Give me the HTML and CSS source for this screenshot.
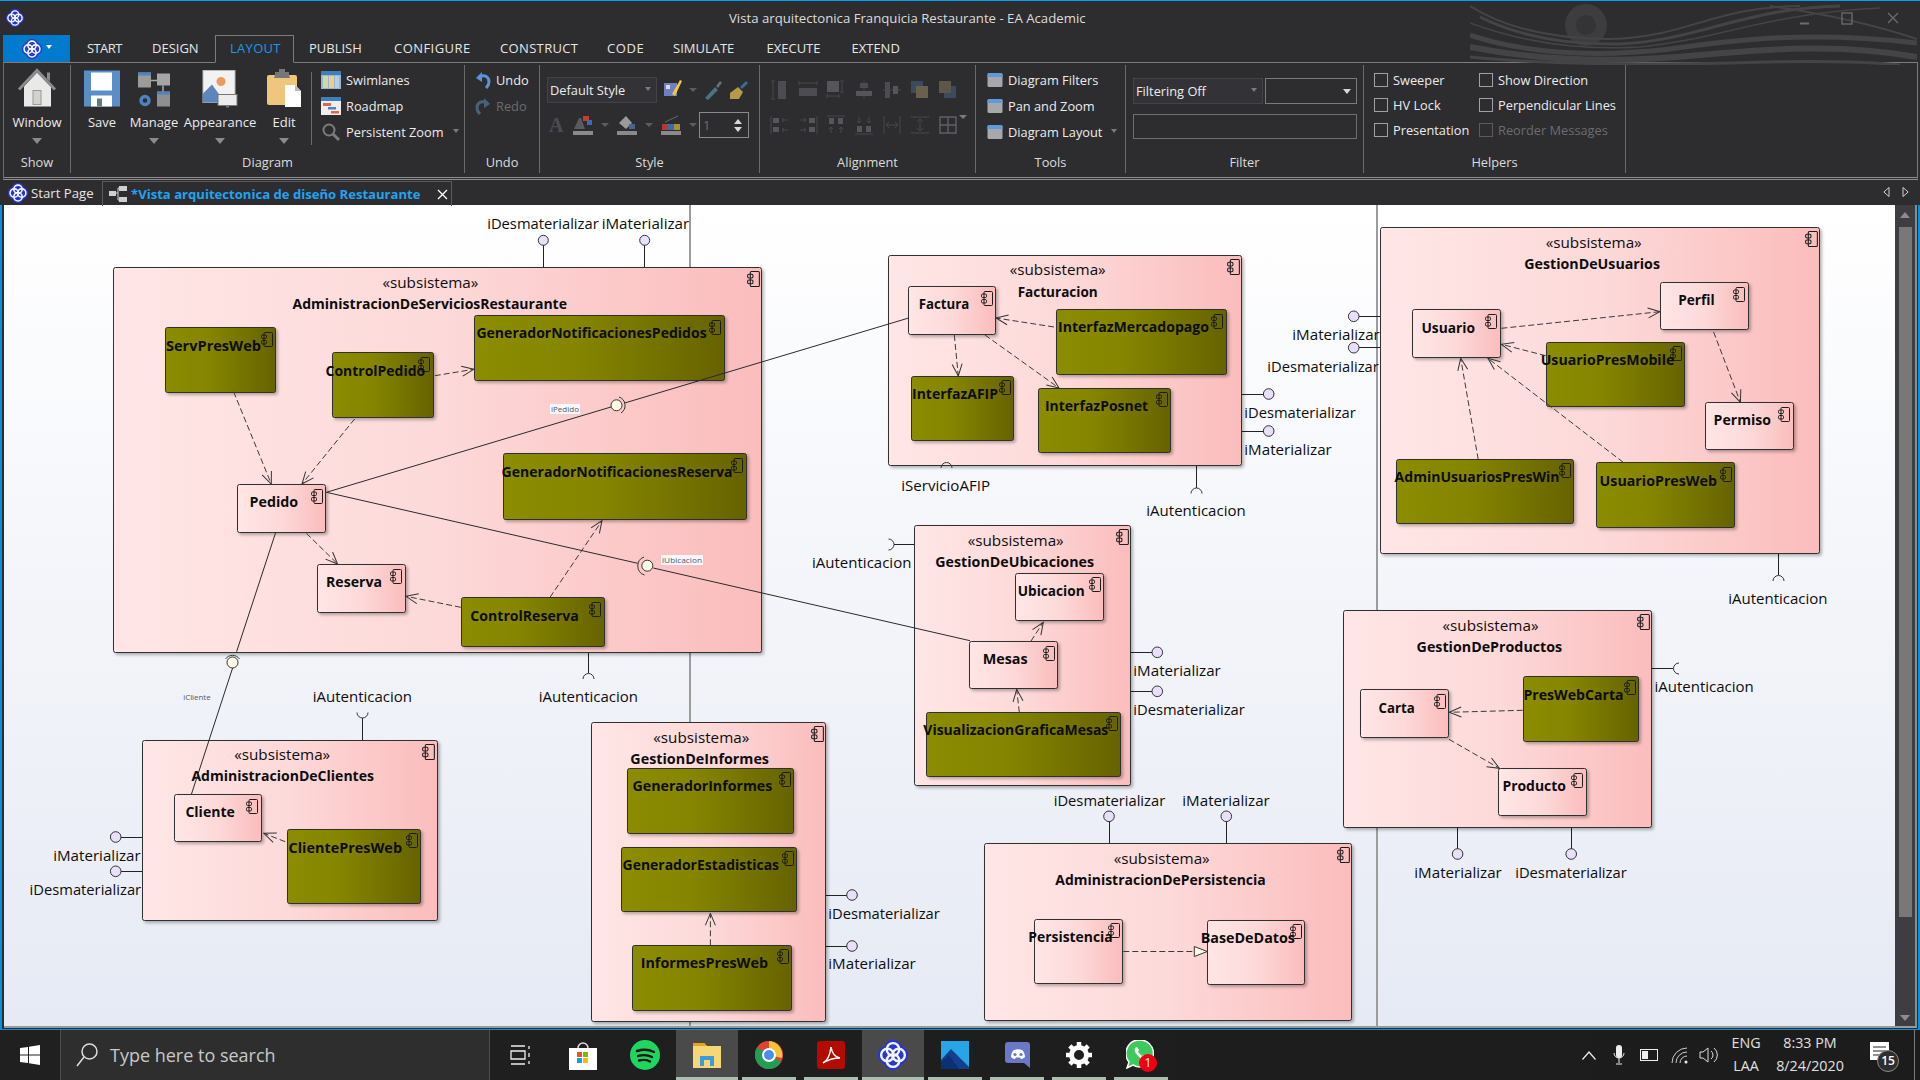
FILE: index.html
```html
<!DOCTYPE html>
<html lang="en">
<head>
<meta charset="utf-8">
<title>Vista arquitectonica Franquicia Restaurante - EA Academic</title>
<link rel="stylesheet" href="styles.css">
</head>
<body>
<svg class="sprite" aria-hidden="true">
  <symbol id="ea" viewBox="0 0 24 24">
    <g fill="none" stroke="#2636d8" stroke-width="5.200">
      <circle cx="12" cy="7.500" r="5"/><circle cx="16.500" cy="12" r="5"/><circle cx="12" cy="16.500" r="5"/><circle cx="7.500" cy="12" r="5"/>
    </g>
    <g fill="none" stroke="#f4f6ff" stroke-width="1.900">
      <circle cx="12" cy="7.500" r="5"/><circle cx="16.500" cy="12" r="5"/><circle cx="12" cy="16.500" r="5"/><circle cx="7.500" cy="12" r="5"/>
    </g>
  </symbol>
  <symbol id="comp" viewBox="0 0 12 15">
    <rect x="3" y=".5" width="8.500" height="14" rx="1" fill="none" stroke="#1c1c1c"/>
    <rect x=".5" y="3" width="5" height="3.500" rx="1.200" fill="none" stroke="#1c1c1c"/>
    <rect x=".5" y="8.500" width="5" height="3.500" rx="1.200" fill="none" stroke="#1c1c1c"/>
  </symbol>
  <symbol id="win-tile" viewBox="0 0 16 16">
    <rect x=".5" y="1" width="15" height="14" rx="1.500" fill="#a8a8ac"/>
    <path d="M.5 5V2.500A1.500 1.500 0 0 1 2 1h12a1.500 1.500 0 0 1 1.500 1.500V5z" fill="#5f9bd8"/>
  </symbol>
  <symbol id="al1" viewBox="0 0 20 20"><path d="M3 1v18M1 1h4M1 19h4" stroke="#47474d" fill="none"/><rect x="8" y="1" width="8" height="18" fill="#4c4c52"/></symbol>
  <symbol id="al2" viewBox="0 0 20 20"><path d="M1 3h18M1 1v4M19 1v4" stroke="#47474d" fill="none"/><rect x="1" y="8" width="18" height="8" fill="#4c4c52"/></symbol>
  <symbol id="al3" viewBox="0 0 20 20"><rect x="1" y="1" width="12" height="11" fill="#55555b"/><path d="M16 1v11M14 1h4M14 12h4M1 16h12M1 14v4M13 14v4" stroke="#47474d" fill="none"/></symbol>
  <symbol id="al4" viewBox="0 0 20 20"><path d="M10 1v18" stroke="#47474d"/><rect x="6" y="3" width="8" height="5" fill="#4c4c52"/><rect x="2" y="11" width="16" height="5" fill="#55555b"/></symbol>
  <symbol id="al5" viewBox="0 0 20 20"><path d="M1 10h18" stroke="#47474d"/><rect x="3" y="2" width="5" height="16" fill="#4c4c52"/><rect x="11" y="6" width="5" height="8" fill="#55555b"/></symbol>
  <symbol id="al6" viewBox="0 0 20 20"><rect x="1" y="1" width="12" height="12" fill="#3b4a5e"/><rect x="6" y="6" width="12" height="12" fill="#6a614c"/></symbol>
  <symbol id="al7" viewBox="0 0 20 20"><rect x="6" y="6" width="12" height="12" fill="#3b4a5e"/><rect x="1" y="1" width="12" height="12" fill="#5c5748"/></symbol>
  <symbol id="al8" viewBox="0 0 20 20"><path d="M1 1v18" stroke="#47474d"/><rect x="3" y="3" width="6" height="5" fill="#55555b"/><rect x="3" y="12" width="6" height="5" fill="#55555b"/><path d="M18 5h-6M12 5l2-2M12 5l2 2M18 15h-6M12 15l2-2M12 15l2 2" stroke="#47474d" fill="none"/></symbol>
  <symbol id="al9" viewBox="0 0 20 20"><path d="M19 1v18" stroke="#47474d"/><rect x="11" y="3" width="6" height="5" fill="#55555b"/><rect x="11" y="12" width="6" height="5" fill="#55555b"/><path d="M2 5h6M8 5L6 3M8 5L6 7M2 15h6M8 15l-2-2M8 15l-2 2" stroke="#47474d" fill="none"/></symbol>
  <symbol id="al10" viewBox="0 0 20 20"><path d="M1 1h18" stroke="#47474d"/><rect x="3" y="3" width="5" height="6" fill="#55555b"/><rect x="12" y="3" width="5" height="6" fill="#55555b"/><path d="M5 18v-6M5 12l-2 2M5 12l2 2M15 18v-6M15 12l-2 2M15 12l2 2" stroke="#47474d" fill="none"/></symbol>
  <symbol id="al11" viewBox="0 0 20 20"><path d="M1 19h18" stroke="#47474d"/><rect x="3" y="11" width="5" height="6" fill="#55555b"/><rect x="12" y="11" width="5" height="6" fill="#55555b"/><path d="M5 2v6M5 8L3 6M5 8l2-2M15 2v6M15 8l-2-2M15 8l2-2" stroke="#47474d" fill="none"/></symbol>
  <symbol id="al12" viewBox="0 0 20 20"><path d="M2 1v18M18 1v18M4 10h12M4 10l3-3M4 10l3 3M16 10l-3-3M16 10l-3 3" stroke="#47474d" fill="none"/></symbol>
  <symbol id="al13" viewBox="0 0 20 20"><path d="M1 2h18M1 18h18M10 4v12M10 4L7 7M10 4l3 3M10 16l-3-3M10 16l3-3" stroke="#47474d" fill="none"/></symbol>
  <symbol id="al14" viewBox="0 0 20 20"><path d="M2 2h16v16H2zM10 2v16M2 10h16" stroke="#5f5f68" stroke-width="1.400" fill="none"/></symbol>
</svg>

<div class="window">
  <header class="titlebar">
    <svg class="app-icon" width="18" height="18"><use href="#ea"/></svg>
    <span class="title-text">Vista arquitectonica Franquicia Restaurante - EA Academic</span>
    <svg class="swoosh" width="447" height="62" viewBox="0 0 447 62" fill="none" stroke="#444447">
      <circle cx="116" cy="22" r="21" fill="#3d3d40" stroke="none"/>
      <circle cx="116" cy="22" r="10" fill="#343437" stroke="none"/>
      <path d="M0 3C40 28 90 36 140 36 220 34 240 4 330 3" stroke-width="2"/>
      <path d="M10 14C50 34 95 42 150 41 230 37 270 6 370 3" stroke-width="3"/>
      <path d="M0 20C60 42 120 47 170 44 250 36 300 10 410 5" stroke-width="1.500"/>
      <path d="M0 32C60 52 130 54 200 46 270 36 340 28 447 40" stroke-width="5"/>
      <path d="M0 44C70 58 150 60 230 52 300 46 370 40 447 54" stroke-width="6"/>
      <path d="M0 54C80 62 170 62 260 60 320 58 390 58 430 62" stroke-width="3"/>
      <path d="M300 3C350 10 400 20 447 36" stroke-width="2"/>
    </svg>
    <div class="winctl">
      <svg width="118" height="16" viewBox="0 0 118 16" fill="none" stroke="#6d6d70" stroke-width="1.300">
        <path d="M0 11.500h9" stroke-width="2"/>
        <rect x="42" y="1" width="10" height="11"/>
        <path d="M88 1l10 10M98 1L88 11"/>
      </svg>
    </div>
  </header>

  <nav class="menubar">
    <div class="menu-app">
      <svg width="20" height="20"><use href="#ea"/></svg>
      <span class="menu-caret"></span>
    </div>
    <span class="tab t-start">START</span>
    <span class="tab t-design">DESIGN</span>
    <span class="tab tab-on">LAYOUT</span>
    <span class="tab t-publish">PUBLISH</span>
    <span class="tab t-configure">CONFIGURE</span>
    <span class="tab t-construct">CONSTRUCT</span>
    <span class="tab t-code">CODE</span>
    <span class="tab t-simulate">SIMULATE</span>
    <span class="tab t-execute">EXECUTE</span>
    <span class="tab">EXTEND</span>
  </nav>

  <section class="ribbon">
    <div class="grp g-show">
      <div class="grp-body">
        <div class="big w-full">
          <svg class="big-ico" width="40" height="40" viewBox="0 0 40 40">
            <path d="M7 18v20h27V18L20 4z" fill="#e9e9e7"/>
            <path d="M2 21L20 2l18 19" fill="none" stroke="#8b8b8b" stroke-width="3"/>
            <path d="M30 4h3v9l-3-3z" fill="#8b8b8b"/>
            <rect x="16" y="22" width="8" height="14" fill="#d2d2d0" stroke="#9a9a9a"/>
          </svg>
          <span class="big-label">Window</span><span class="caret-big"></span>
        </div>
      </div>
      <div class="grp-label">Show</div>
    </div>

    <div class="grp g-diagram">
      <div class="grp-body row">
        <div class="big w48">
          <svg class="big-ico" width="36" height="36" viewBox="0 0 36 36">
            <rect width="36" height="36" fill="#5b8ec7"/>
            <rect x="7" y="2" width="21" height="18" fill="#fff"/>
            <rect x="7" y="25" width="21" height="11" fill="#fff"/>
            <rect x="13" y="28" width="5" height="8" fill="#5d7d80"/>
          </svg>
          <span class="big-label">Save</span>
        </div>
        <div class="big w56">
          <svg class="big-ico" width="34" height="36" viewBox="0 0 34 36">
            <rect x="1" y="2" width="13" height="15" fill="#9b9b9b"/><rect x="1" y="2" width="13" height="3" fill="#4d84bd"/>
            <rect x="20" y="3" width="13" height="12" fill="#a5a5a5"/>
            <rect x="20" y="21" width="13" height="15" fill="#8f8f8f"/><rect x="20" y="21" width="13" height="3" fill="#4d84bd"/>
            <path d="M14 10h6M26 15v6" stroke="#aaa" stroke-width="1.500"/>
            <circle cx="8" cy="30" r="4" fill="none" stroke="#4d84bd" stroke-width="3.400"/>
          </svg>
          <span class="big-label">Manage</span><span class="caret-big"></span>
        </div>
        <div class="big w76">
          <svg class="big-ico" width="36" height="38" viewBox="0 0 36 38">
            <rect x="1" y="1" width="32" height="32" fill="#f2f2f2" stroke="#bbb"/>
            <circle cx="19" cy="12" r="4.500" fill="#ec9c5a"/>
            <path d="M1 33V24l9-9 13 18z" fill="#5b87bd"/>
            <rect x="16" y="25" width="19" height="11" fill="#ececec" stroke="#777"/>
            <path d="M24 36h3v2h-3z" fill="#777"/>
          </svg>
          <span class="big-label">Appearance</span><span class="caret-big"></span>
        </div>
        <div class="big w52">
          <svg class="big-ico" width="36" height="39" viewBox="0 0 36 39">
            <rect x="1" y="6" width="30" height="30" rx="2" fill="#eec67d"/>
            <path d="M9 6V3h4V0h6v3h4v3l1 3H8z" fill="#77777a"/>
            <path d="M19 16h10l6 6v16H19z" fill="#fff"/>
            <path d="M29 16v6h6z" fill="#bbb"/>
          </svg>
          <span class="big-label">Edit</span><span class="caret-big"></span>
        </div>
        <div class="grp-sep"></div>
        <div class="small-col">
          <div class="small">
            <svg width="20" height="18" viewBox="0 0 20 18"><rect width="20" height="18" fill="#9bb5cc"/><rect y="0" width="20" height="4" fill="#3f7fbd"/><rect x="2" y="5" width="5" height="12" fill="#cfd9a8"/><rect x="8" y="5" width="5" height="12" fill="#eacf8e"/><rect x="14" y="5" width="4" height="12" fill="#b5cfe6"/></svg>
            <span>Swimlanes</span>
          </div>
          <div class="small">
            <svg width="20" height="18" viewBox="0 0 20 18"><rect width="20" height="18" fill="#eee"/><rect width="20" height="4" fill="#3f7fbd"/><rect x="2" y="6" width="8" height="3" fill="#d9694e"/><rect x="7" y="10" width="8" height="2.500" fill="#4d84bd"/><rect x="10" y="14" width="8" height="2.500" fill="#d9694e"/></svg>
            <span>Roadmap</span>
          </div>
          <div class="small">
            <svg width="20" height="20" viewBox="0 0 20 20" fill="none"><circle cx="8" cy="8" r="5.500" stroke="#7c7c7c" stroke-width="2"/><path d="M12 12l6 6" stroke="#7c7c7c" stroke-width="3"/></svg>
            <span>Persistent Zoom</span><span class="caret-sm"></span>
          </div>
        </div>
      </div>
      <div class="grp-label">Diagram</div>
    </div>

    <div class="grp g-undo">
      <div class="grp-body col">
        <div class="small">
          <svg width="16" height="18" viewBox="0 0 16 18" fill="none"><path d="M4 6c6-3 10 0 10 5 0 2-1 4-3 6" stroke="#5b94d6" stroke-width="3"/><path d="M1 7l6-6v10z" fill="#5b94d6"/></svg>
          <span>Undo</span>
        </div>
        <div class="small dim">
          <svg width="16" height="18" viewBox="0 0 16 18" fill="none"><path d="M12 6C6 3 2 6 2 11c0 2 1 4 3 6" stroke="#4a6278" stroke-width="3"/><path d="M15 7L9 1v10z" fill="#4a6278"/></svg>
          <span>Redo</span>
        </div>
      </div>
      <div class="grp-label">Undo</div>
    </div>

    <div class="grp g-style">
      <div class="grp-body col style-body">
        <div class="style-row">
          <div class="field f-style"><span>Default Style</span><i class="caret-sm"></i></div>
          <svg width="20" height="20" viewBox="0 0 20 20"><rect x="1" y="3" width="13" height="13" fill="#6f7fc4"/><rect x="3" y="5" width="4" height="4" fill="#ddd"/><path d="M12 16L19 1l-2-1-8 14z" fill="#f0c83c"/></svg>
          <span class="caret-xs"></span>
          <svg width="20" height="20" viewBox="0 0 20 20"><path d="M2 18l10-11 3 3L5 20z" fill="#4b7286"/><path d="M13 6l4-5 2 2-4 5z" fill="#6b6b70"/></svg>
          <svg width="20" height="20" viewBox="0 0 20 20"><path d="M1 13l8-6 5 5-4 7H1z" fill="#b59a4a"/><path d="M11 7l6-6 2 2-6 6z" fill="#3f6d8d"/></svg>
        </div>
        <div class="style-row sr2">
          <span class="glyph-a">A</span>
          <svg width="20" height="20" viewBox="0 0 20 20"><rect y="16" width="20" height="4" fill="#8a8a8a"/><path d="M1 14L6 3h2l4 11z" fill="#595960"/><rect x="10" y="1" width="6" height="5" fill="#c63c32"/><rect x="14" y="5" width="5" height="5" fill="#3d69b5"/></svg>
          <span class="caret-xs"></span>
          <svg width="20" height="20" viewBox="0 0 20 20"><rect y="16" width="20" height="4" fill="#8a8a8a"/><path d="M2 8l7-7 6 7-6 6z" fill="#9a9a9a"/><rect x="12" y="9" width="6" height="5" fill="#46668f"/></svg>
          <span class="caret-xs"></span>
          <svg width="20" height="20" viewBox="0 0 20 20"><rect y="16" width="20" height="4" fill="#8a8a8a"/><rect x="1" y="9" width="6" height="6" fill="#b23a32"/><rect x="7" y="9" width="6" height="6" fill="#3f6aa8"/><rect x="13" y="9" width="6" height="6" fill="#a98f3a"/><path d="M4 7L17 1" stroke="#666"/></svg>
          <span class="caret-xs"></span>
          <div class="spin"><span>1</span><b class="spin-btn"><i class="tri-up"></i><i class="tri-dn"></i></b></div>
        </div>
      </div>
      <div class="grp-label">Style</div>
    </div>

    <div class="grp g-align">
      <div class="grp-body align-grid">
        <svg width="20" height="20"><use href="#al1"/></svg><svg width="20" height="20"><use href="#al2"/></svg><svg width="20" height="20"><use href="#al3"/></svg><svg width="20" height="20"><use href="#al4"/></svg><svg width="20" height="20"><use href="#al5"/></svg><svg width="20" height="20"><use href="#al6"/></svg><svg width="20" height="20"><use href="#al7"/></svg>
        <svg width="20" height="20"><use href="#al8"/></svg><svg width="20" height="20"><use href="#al9"/></svg><svg width="20" height="20"><use href="#al10"/></svg><svg width="20" height="20"><use href="#al11"/></svg><svg width="20" height="20"><use href="#al12"/></svg><svg width="20" height="20"><use href="#al13"/></svg><svg width="20" height="20"><use href="#al14"/></svg>
      </div>
      <span class="caret-xs align-caret"></span>
      <div class="grp-label">Alignment</div>
    </div>

    <div class="grp g-tools">
      <div class="grp-body col">
        <div class="small"><svg width="16" height="16"><use href="#win-tile"/></svg><span>Diagram Filters</span></div>
        <div class="small"><svg width="16" height="16"><use href="#win-tile"/></svg><span>Pan and Zoom</span></div>
        <div class="small"><svg width="16" height="16"><use href="#win-tile"/></svg><span>Diagram Layout</span><span class="caret-sm"></span></div>
      </div>
      <div class="grp-label">Tools</div>
    </div>

    <div class="grp g-filter">
      <div class="grp-body col filter-body">
        <div class="filter-row">
          <div class="field f-filter"><span>Filtering Off</span><i class="caret-sm"></i></div>
          <div class="field f-empty"><i class="caret-white"></i></div>
        </div>
        <div class="filter-input"></div>
      </div>
      <div class="grp-label">Filter</div>
    </div>

    <div class="grp g-helpers">
      <div class="grp-body helpers-grid">
        <label class="chk"><i></i>Sweeper</label><label class="chk"><i></i>Show Direction</label>
        <label class="chk"><i></i>HV Lock</label><label class="chk"><i></i>Perpendicular Lines</label>
        <label class="chk"><i></i>Presentation</label><label class="chk off"><i></i>Reorder Messages</label>
      </div>
      <div class="grp-label">Helpers</div>
    </div>
  </section>

  <div class="doctabs">
    <div class="doc doc-start"><svg width="20" height="20"><use href="#ea"/></svg><span>Start Page</span></div>
    <div class="doc doc-on">
      <svg width="19" height="18" viewBox="0 0 19 18"><rect x="0" y="6" width="7" height="5" fill="#cfcfcf"/><rect x="10" y="1" width="8" height="5" fill="#cfcfcf"/><rect x="10" y="12" width="8" height="5" fill="#cfcfcf"/><path d="M7 8h2V3h1M9 8v7h1" stroke="#cfcfcf" fill="none"/></svg>
      <span class="doc-name">*Vista arquitectonica de diseño Restaurante</span>
      <svg class="doc-x" width="11" height="11" viewBox="0 0 11 11"><path d="M1 1l9 9M10 1l-9 9" stroke="#fff" stroke-width="1.300"/></svg>
    </div>
    <div class="doc-nav">
      <svg width="26" height="10" viewBox="0 0 26 10" fill="none" stroke="#cfcfcf"><path d="M6 .5L.8 5 6 9.500zM20 .5L25.200 5 20 9.500z"/></svg>
    </div>
  </div>

  <main class="workspace">
    <div class="canvas">
      <svg class="diagram" width="1891" height="821" viewBox="4 205 1891 821">
        <defs>
          <linearGradient id="pk"><stop offset="0" stop-color="#ffe6e6"/><stop offset=".5" stop-color="#fdd9d9"/><stop offset="1" stop-color="#fbbcbc"/></linearGradient>
          <linearGradient id="ol"><stop offset="0" stop-color="#8c8c00"/><stop offset=".4" stop-color="#858500"/><stop offset="1" stop-color="#666300"/></linearGradient>
          <marker id="open" markerUnits="userSpaceOnUse" markerWidth="14" markerHeight="14" refX="13" refY="7" orient="auto"><path d="M1 2L13 7 1 12" fill="none" stroke="#333"/></marker>
        </defs>

        <path class="lane" d="M690 205V1026M1377 205V1026"/>

        <!-- stems of the interface lollipops and sockets -->
        <path class="stem" d="M543.500 245V267M644.500 245V267M588.500 652V673M362.500 740V718M1196.500 465V488M946.500 440V463M1778.500 553V575M1241 394.500H1263M1241 431.500H1263M1359 316.500H1380M1359 347.500H1380M1130 652.500H1152M1130 691.500H1152M914 544.500H894M1651 668.500H1673M1109.500 843V821M1226.500 843V821M1457.500 827V849M1571.500 827V849M142 837.500H121M142 871.500H121M825 895.500H847M825 946.500H847"/>

        <!-- AdministracionDeServiciosRestaurante -->
        <rect class="box" x="113.500" y="267.500" width="648" height="385" rx="2" fill="url(#pk)"/>
        <use href="#comp" x="747" y="271" width="13" height="16"/>
        <text class="st" x="382.400" y="288" textLength="96" lengthAdjust="spacingAndGlyphs">«subsistema»</text>
        <text class="nm" x="292.500" y="309" textLength="274.500" lengthAdjust="spacingAndGlyphs">AdministracionDeServiciosRestaurante</text>

        <rect class="box" x="165.500" y="327.500" width="110" height="65" rx="2" fill="url(#ol)"/>
        <use href="#comp" x="261" y="332" width="12" height="15"/>
        <text class="nm" x="166" y="350.700" textLength="95" lengthAdjust="spacingAndGlyphs">ServPresWeb</text>

        <rect class="box" x="332.500" y="352.500" width="101" height="65" rx="2" fill="url(#ol)"/>
        <use href="#comp" x="418" y="357" width="12" height="15"/>
        <text class="nm" x="325.500" y="376" textLength="99.700" lengthAdjust="spacingAndGlyphs">ControlPedido</text>

        <rect class="box" x="474.500" y="315.500" width="250" height="65" rx="2" fill="url(#ol)"/>
        <use href="#comp" x="709" y="320" width="12" height="15"/>
        <text class="nm" x="476.400" y="338" textLength="230.300" lengthAdjust="spacingAndGlyphs">GeneradorNotificacionesPedidos</text>

        <rect class="box" x="237.500" y="484.500" width="88" height="48" rx="2" fill="url(#pk)"/>
        <use href="#comp" x="311" y="489" width="12" height="15"/>
        <text class="nm" x="249.600" y="506.700" textLength="48.600" lengthAdjust="spacingAndGlyphs">Pedido</text>

        <rect class="box" x="503.500" y="453.500" width="243" height="66" rx="2" fill="url(#ol)"/>
        <use href="#comp" x="731" y="458" width="12" height="15"/>
        <text class="nm" x="501.600" y="477" textLength="231" lengthAdjust="spacingAndGlyphs">GeneradorNotificacionesReserva</text>

        <rect class="box" x="317.500" y="564.500" width="88" height="48" rx="2" fill="url(#pk)"/>
        <use href="#comp" x="390" y="569" width="12" height="15"/>
        <text class="nm" x="326" y="587" textLength="56" lengthAdjust="spacingAndGlyphs">Reserva</text>

        <rect class="box" x="461.500" y="597.500" width="143" height="49" rx="2" fill="url(#ol)"/>
        <use href="#comp" x="589" y="602" width="12" height="15"/>
        <text class="nm" x="470.300" y="621" textLength="108.400" lengthAdjust="spacingAndGlyphs">ControlReserva</text>

        <!-- Facturacion -->
        <rect class="box" x="888.500" y="255.500" width="353" height="210" rx="2" fill="url(#pk)"/>
        <use href="#comp" x="1227" y="259" width="13" height="16"/>
        <text class="st" x="1009.700" y="275.300" textLength="96" lengthAdjust="spacingAndGlyphs">«subsistema»</text>
        <text class="nm" x="1017.700" y="296.700" textLength="80" lengthAdjust="spacingAndGlyphs">Facturacion</text>

        <rect class="box" x="908.500" y="286.500" width="87" height="48" rx="2" fill="url(#pk)"/>
        <use href="#comp" x="981" y="291" width="12" height="15"/>
        <text class="nm" x="918.700" y="308.700" textLength="50.600" lengthAdjust="spacingAndGlyphs">Factura</text>

        <rect class="box" x="1056.500" y="309.500" width="170" height="65" rx="2" fill="url(#ol)"/>
        <use href="#comp" x="1211" y="314" width="12" height="15"/>
        <text class="nm" x="1058" y="332" textLength="151" lengthAdjust="spacingAndGlyphs">InterfazMercadopago</text>

        <rect class="box" x="911.500" y="376.500" width="102" height="64" rx="2" fill="url(#ol)"/>
        <use href="#comp" x="999" y="380" width="12" height="15"/>
        <text class="nm" x="912" y="398.700" textLength="86" lengthAdjust="spacingAndGlyphs">InterfazAFIP</text>

        <rect class="box" x="1038.500" y="388.500" width="132" height="64" rx="2" fill="url(#ol)"/>
        <use href="#comp" x="1156" y="392" width="12" height="15"/>
        <text class="nm" x="1045" y="411" textLength="103" lengthAdjust="spacingAndGlyphs">InterfazPosnet</text>

        <!-- GestionDeUsuarios -->
        <rect class="box" x="1380.500" y="227.500" width="439" height="326" rx="2" fill="url(#pk)"/>
        <use href="#comp" x="1805" y="231" width="13" height="16"/>
        <text class="st" x="1545.700" y="247.700" textLength="96" lengthAdjust="spacingAndGlyphs">«subsistema»</text>
        <text class="nm" x="1524.300" y="268.700" textLength="135.700" lengthAdjust="spacingAndGlyphs">GestionDeUsuarios</text>

        <rect class="box" x="1412.500" y="309.500" width="88" height="48" rx="2" fill="url(#pk)"/>
        <use href="#comp" x="1485" y="314" width="12" height="15"/>
        <text class="nm" x="1421.400" y="332.700" textLength="53.600" lengthAdjust="spacingAndGlyphs">Usuario</text>

        <rect class="box" x="1660.500" y="282.500" width="88" height="47" rx="2" fill="url(#pk)"/>
        <use href="#comp" x="1733" y="287" width="12" height="15"/>
        <text class="nm" x="1678.200" y="304.700" textLength="36.400" lengthAdjust="spacingAndGlyphs">Perfil</text>

        <rect class="box" x="1546.500" y="342.500" width="138" height="64" rx="2" fill="url(#ol)"/>
        <use href="#comp" x="1670" y="346" width="12" height="15"/>
        <text class="nm" x="1540.700" y="364.700" textLength="133.600" lengthAdjust="spacingAndGlyphs">UsuarioPresMobile</text>

        <rect class="box" x="1705.500" y="402.500" width="88" height="47" rx="2" fill="url(#pk)"/>
        <use href="#comp" x="1778" y="407" width="12" height="15"/>
        <text class="nm" x="1713.600" y="425" textLength="57.400" lengthAdjust="spacingAndGlyphs">Permiso</text>

        <rect class="box" x="1396.500" y="459.500" width="177" height="64" rx="2" fill="url(#ol)"/>
        <use href="#comp" x="1559" y="463" width="12" height="15"/>
        <text class="nm" x="1394.600" y="481.700" textLength="165" lengthAdjust="spacingAndGlyphs">AdminUsuariosPresWin</text>

        <rect class="box" x="1596.500" y="462.500" width="138" height="65" rx="2" fill="url(#ol)"/>
        <use href="#comp" x="1720" y="467" width="12" height="15"/>
        <text class="nm" x="1599.600" y="485.700" textLength="117.400" lengthAdjust="spacingAndGlyphs">UsuarioPresWeb</text>

        <!-- AdministracionDeClientes -->
        <rect class="box" x="142.500" y="740.500" width="295" height="180" rx="2" fill="url(#pk)"/>
        <use href="#comp" x="422" y="744" width="13" height="16"/>
        <text class="st" x="234.200" y="760" textLength="96" lengthAdjust="spacingAndGlyphs">«subsistema»</text>
        <text class="nm" x="191.400" y="780.700" textLength="182.600" lengthAdjust="spacingAndGlyphs">AdministracionDeClientes</text>

        <rect class="box" x="174.500" y="794.500" width="87" height="47" rx="2" fill="url(#pk)"/>
        <use href="#comp" x="246" y="799" width="12" height="15"/>
        <text class="nm" x="185.400" y="816.700" textLength="49.400" lengthAdjust="spacingAndGlyphs">Cliente</text>

        <rect class="box" x="287.500" y="829.500" width="133" height="74" rx="2" fill="url(#ol)"/>
        <use href="#comp" x="406" y="833" width="12" height="15"/>
        <text class="nm" x="288.500" y="852.700" textLength="113.500" lengthAdjust="spacingAndGlyphs">ClientePresWeb</text>

        <!-- GestionDeInformes -->
        <rect class="box" x="591.500" y="722.500" width="234" height="299" rx="2" fill="url(#pk)"/>
        <use href="#comp" x="811" y="726" width="13" height="16"/>
        <text class="st" x="653.300" y="742.700" textLength="96" lengthAdjust="spacingAndGlyphs">«subsistema»</text>
        <text class="nm" x="630.300" y="763.700" textLength="138.700" lengthAdjust="spacingAndGlyphs">GestionDeInformes</text>

        <rect class="box" x="627.500" y="768.500" width="166" height="65" rx="2" fill="url(#ol)"/>
        <use href="#comp" x="779" y="772" width="12" height="15"/>
        <text class="nm" x="632.500" y="790.700" textLength="139.800" lengthAdjust="spacingAndGlyphs">GeneradorInformes</text>

        <rect class="box" x="621.500" y="847.500" width="175" height="64" rx="2" fill="url(#ol)"/>
        <use href="#comp" x="782" y="851" width="12" height="15"/>
        <text class="nm" x="622.600" y="869.700" textLength="156.400" lengthAdjust="spacingAndGlyphs">GeneradorEstadisticas</text>

        <rect class="box" x="632.500" y="945.500" width="159" height="65" rx="2" fill="url(#ol)"/>
        <use href="#comp" x="777" y="949" width="12" height="15"/>
        <text class="nm" x="640.700" y="967.700" textLength="127.300" lengthAdjust="spacingAndGlyphs">InformesPresWeb</text>

        <!-- GestionDeUbicaciones -->
        <rect class="box" x="914.500" y="525.500" width="216" height="260" rx="2" fill="url(#pk)"/>
        <use href="#comp" x="1116" y="529" width="13" height="16"/>
        <text class="st" x="967.700" y="545.700" textLength="96" lengthAdjust="spacingAndGlyphs">«subsistema»</text>
        <text class="nm" x="935.300" y="566.700" textLength="158.700" lengthAdjust="spacingAndGlyphs">GestionDeUbicaciones</text>

        <rect class="box" x="1015.500" y="573.500" width="88" height="47" rx="2" fill="url(#pk)"/>
        <use href="#comp" x="1089" y="577" width="12" height="15"/>
        <text class="nm" x="1017.700" y="596" textLength="67" lengthAdjust="spacingAndGlyphs">Ubicacion</text>

        <rect class="box" x="969.500" y="641.500" width="88" height="47" rx="2" fill="url(#pk)"/>
        <use href="#comp" x="1043" y="646" width="12" height="15"/>
        <text class="nm" x="982.700" y="664" textLength="45" lengthAdjust="spacingAndGlyphs">Mesas</text>

        <rect class="box" x="926.500" y="712.500" width="194" height="64" rx="2" fill="url(#ol)"/>
        <use href="#comp" x="1106" y="716" width="12" height="15"/>
        <text class="nm" x="923.300" y="735" textLength="185" lengthAdjust="spacingAndGlyphs">VisualizacionGraficaMesas</text>

        <!-- AdministracionDePersistencia -->
        <rect class="box" x="984.500" y="843.500" width="367" height="177" rx="2" fill="url(#pk)"/>
        <use href="#comp" x="1337" y="847" width="13" height="16"/>
        <text class="st" x="1113.700" y="863.700" textLength="96" lengthAdjust="spacingAndGlyphs">«subsistema»</text>
        <text class="nm" x="1055.300" y="884.700" textLength="210.400" lengthAdjust="spacingAndGlyphs">AdministracionDePersistencia</text>

        <rect class="box" x="1034.500" y="919.500" width="88" height="64" rx="2" fill="url(#pk)"/>
        <use href="#comp" x="1108" y="923" width="12" height="15"/>
        <text class="nm" x="1028.300" y="941.700" textLength="84.400" lengthAdjust="spacingAndGlyphs">Persistencia</text>

        <rect class="box" x="1207.500" y="920.500" width="97" height="64" rx="2" fill="url(#pk)"/>
        <use href="#comp" x="1290" y="924" width="12" height="15"/>
        <text class="nm" x="1200.700" y="942.700" textLength="94.300" lengthAdjust="spacingAndGlyphs">BaseDeDatos</text>

        <!-- GestionDeProductos -->
        <rect class="box" x="1343.500" y="610.500" width="308" height="217" rx="2" fill="url(#pk)"/>
        <use href="#comp" x="1637" y="614" width="13" height="16"/>
        <text class="st" x="1442.500" y="630.700" textLength="96" lengthAdjust="spacingAndGlyphs">«subsistema»</text>
        <text class="nm" x="1416.600" y="651.700" textLength="145.600" lengthAdjust="spacingAndGlyphs">GestionDeProductos</text>

        <rect class="box" x="1360.500" y="689.500" width="88" height="48" rx="2" fill="url(#pk)"/>
        <use href="#comp" x="1434" y="694" width="12" height="15"/>
        <text class="nm" x="1378.600" y="712.700" textLength="36.100" lengthAdjust="spacingAndGlyphs">Carta</text>

        <rect class="box" x="1523.500" y="676.500" width="115" height="65" rx="2" fill="url(#ol)"/>
        <use href="#comp" x="1624" y="680" width="12" height="15"/>
        <text class="nm" x="1523.400" y="700" textLength="100.200" lengthAdjust="spacingAndGlyphs">PresWebCarta</text>

        <rect class="box" x="1498.500" y="768.500" width="88" height="47" rx="2" fill="url(#pk)"/>
        <use href="#comp" x="1571" y="773" width="12" height="15"/>
        <text class="nm" x="1502.400" y="790.700" textLength="63.600" lengthAdjust="spacingAndGlyphs">Producto</text>

        <!-- dependency arrows -->
        <g class="dep">
          <path marker-end="url(#open)" d="M233.600 391.700L271.300 484"/>
          <path marker-end="url(#open)" d="M354.600 419L302 484"/>
          <path marker-end="url(#open)" d="M434.800 375.700L473.800 369.300"/>
          <path marker-end="url(#open)" d="M306.400 533.300L337.600 564"/>
          <path marker-end="url(#open)" d="M460.800 607.300L406 596.300"/>
          <path marker-end="url(#open)" d="M550 597.300L602 520.700"/>
          <path marker-end="url(#open)" d="M1054 327L996 318"/>
          <path marker-end="url(#open)" d="M954.300 335L958.300 376"/>
          <path marker-end="url(#open)" d="M985 335L1059 388"/>
          <path marker-end="url(#open)" d="M1501.400 328.300L1660 311.700"/>
          <path marker-end="url(#open)" d="M1713.600 332L1740.400 402.300"/>
          <path marker-end="url(#open)" d="M1545.700 355.700L1501.400 344.300"/>
          <path marker-end="url(#open)" d="M1478.200 459.300L1460.700 358.300"/>
          <path marker-end="url(#open)" d="M1623.200 462.300L1487.900 358.300"/>
          <path marker-end="url(#open)" d="M285.200 841.700L263.800 833.300"/>
          <path marker-end="url(#open)" d="M710.400 945.300V913.300"/>
          <path marker-end="url(#open)" d="M1031 641L1043.300 622.300"/>
          <path marker-end="url(#open)" d="M1019.300 712.300L1016.700 689.300"/>
          <path marker-end="url(#open)" d="M1522.700 710.300L1449.300 712.300"/>
          <path marker-end="url(#open)" d="M1449 739.300L1499.400 768.300"/>
          <path d="M1123.300 951.500H1194.300"/>
        </g>
        <path class="tri" d="M1194.300 946.500L1207.300 951.500 1194.300 956.500z"/>

        <!-- assembly connectors -->
        <path class="wire" d="M326.400 492.300L611.300 406.900M624.700 403L908.700 318M326.400 492.300L637.700 563.300M653.300 568L970 640.700M275.600 532.700L236.600 651.700M232.600 668L191.400 794.300"/>
        <circle class="ball" cx="616.500" cy="405.300" r="5.500"/><path class="arc" d="M619 397A9 9 0 0 1 621 413"/>
        <circle class="ball" cx="647.300" cy="565.700" r="5.500"/><path class="arc" d="M644 557A9.500 9.500 0 0 0 644.500 575"/>
        <circle class="ball" cx="232.500" cy="662.500" r="5.500"/><path class="arc" d="M225.500 659A8.500 8.500 0 0 1 239.500 659"/>
        <rect class="tag" x="550" y="404" width="30" height="10"/><text class="tiny" x="551" y="411.500" textLength="28" lengthAdjust="spacingAndGlyphs">iPedido</text>
        <rect class="tag" x="661" y="555" width="42" height="10"/><text class="tiny" x="662" y="562.500" textLength="40" lengthAdjust="spacingAndGlyphs">iUbicacion</text>
        <text class="tiny" x="183.200" y="699.500" textLength="27.400" lengthAdjust="spacingAndGlyphs">iCliente</text>

        <!-- provided and required interfaces -->
        <g class="lolli">
          <circle cx="543.300" cy="240.300" r="5"/><circle cx="644.700" cy="240.300" r="5"/>
          <circle cx="1268.700" cy="394" r="5.300"/><circle cx="1268.700" cy="431" r="5.300"/>
          <circle cx="1353.700" cy="316.300" r="5.300"/><circle cx="1353.700" cy="347.700" r="5.300"/>
          <circle cx="1157.300" cy="652.300" r="5.300"/><circle cx="1157.300" cy="691.300" r="5.300"/>
          <circle cx="1109" cy="816.300" r="5.300"/><circle cx="1226.300" cy="816.300" r="5.300"/>
          <circle cx="1457.600" cy="854" r="5.300"/><circle cx="1571.200" cy="854" r="5.300"/>
          <circle cx="115.700" cy="837" r="5.300"/><circle cx="115.700" cy="871.300" r="5.300"/>
          <circle cx="852" cy="895" r="5.300"/><circle cx="852" cy="946" r="5.300"/>
        </g>
        <path class="arc" d="M583 679A5.500 5.500 0 0 1 594 679M357 712.500A5.500 5.500 0 0 0 368 712.500M1191 493.500A5.500 5.500 0 0 1 1202 493.500M941 468A5.500 5.500 0 0 1 952 468M1773 581A5.500 5.500 0 0 1 1784 581M888.500 539A5.500 5.500 0 0 1 888.500 550M1679 663A5.500 5.500 0 0 0 1679 674"/>

        <text class="lb" x="487.200" y="228.700" textLength="111.500" lengthAdjust="spacingAndGlyphs">iDesmaterializar</text>
        <text class="lb" x="601.700" y="228.700" textLength="87.500" lengthAdjust="spacingAndGlyphs">iMaterializar</text>
        <text class="lb" x="901.300" y="490.700" textLength="88.700" lengthAdjust="spacingAndGlyphs">iServicioAFIP</text>
        <text class="lb" x="1146.300" y="515.700" textLength="99.400" lengthAdjust="spacingAndGlyphs">iAutenticacion</text>
        <text class="lb" x="1244.300" y="417.700" textLength="111.500" lengthAdjust="spacingAndGlyphs">iDesmaterializar</text>
        <text class="lb" x="1244.300" y="454.700" textLength="87.500" lengthAdjust="spacingAndGlyphs">iMaterializar</text>
        <text class="lb" x="1292.300" y="340" textLength="87.500" lengthAdjust="spacingAndGlyphs">iMaterializar</text>
        <text class="lb" x="1267.300" y="371.700" textLength="111.500" lengthAdjust="spacingAndGlyphs">iDesmaterializar</text>
        <text class="lb" x="1728.200" y="604" textLength="99.400" lengthAdjust="spacingAndGlyphs">iAutenticacion</text>
        <text class="lb" x="312.700" y="702" textLength="99.400" lengthAdjust="spacingAndGlyphs">iAutenticacion</text>
        <text class="lb" x="538.700" y="702" textLength="99.400" lengthAdjust="spacingAndGlyphs">iAutenticacion</text>
        <text class="lb" x="53.200" y="860.700" textLength="87.500" lengthAdjust="spacingAndGlyphs">iMaterializar</text>
        <text class="lb" x="29.600" y="894.700" textLength="111.500" lengthAdjust="spacingAndGlyphs">iDesmaterializar</text>
        <text class="lb" x="828.300" y="918.700" textLength="111.500" lengthAdjust="spacingAndGlyphs">iDesmaterializar</text>
        <text class="lb" x="828.300" y="969.300" textLength="87.500" lengthAdjust="spacingAndGlyphs">iMaterializar</text>
        <text class="lb" x="1133.300" y="675.700" textLength="87.500" lengthAdjust="spacingAndGlyphs">iMaterializar</text>
        <text class="lb" x="1133.300" y="715" textLength="111.500" lengthAdjust="spacingAndGlyphs">iDesmaterializar</text>
        <text class="lb" x="812" y="567.700" textLength="99.400" lengthAdjust="spacingAndGlyphs">iAutenticacion</text>
        <text class="lb" x="1053.700" y="805.700" textLength="111.500" lengthAdjust="spacingAndGlyphs">iDesmaterializar</text>
        <text class="lb" x="1182.300" y="805.700" textLength="87.500" lengthAdjust="spacingAndGlyphs">iMaterializar</text>
        <text class="lb" x="1654.400" y="691.700" textLength="99.400" lengthAdjust="spacingAndGlyphs">iAutenticacion</text>
        <text class="lb" x="1414.300" y="877.700" textLength="87.500" lengthAdjust="spacingAndGlyphs">iMaterializar</text>
        <text class="lb" x="1515.200" y="877.700" textLength="111.500" lengthAdjust="spacingAndGlyphs">iDesmaterializar</text>
      </svg>
    </div>
    <div class="vscroll">
      <i class="vs-up"></i>
      <div class="vs-thumb"></div>
      <i class="vs-down"></i>
    </div>
  </main>

  <footer class="taskbar">
    <div class="start">
      <svg width="20" height="20" viewBox="0 0 20 20" fill="#fff"><path d="M0 3l8-1v7.500H0zM9 1.800L20 0v9.500H9zM0 10.500h8V18l-8-1zM9 10.500h11V20L9 18.200z"/></svg>
    </div>
    <div class="search">
      <svg width="22" height="24" viewBox="0 0 22 24" fill="none" stroke="#ddd" stroke-width="1.500"><circle cx="13.500" cy="8.500" r="7.500"/><path d="M8 14L1 23"/></svg>
      <span>Type here to search</span>
    </div>
    <div class="tb"><svg width="22" height="20" viewBox="0 0 22 20" fill="none" stroke="#eee" stroke-width="1.300"><path d="M1 1h14M1 19h14M1 6h14v8H1zM19 1v3M19 8v4M19 16v3"/></svg></div>
    <div class="tb"><svg width="30" height="30" viewBox="0 0 30 30"><path d="M10 8a5 5 0 0 1 10 0" fill="none" stroke="#ddd" stroke-width="1.500"/><rect x="1" y="8" width="28" height="22" fill="#fff"/><rect x="9" y="12" width="5" height="5" fill="#f25022"/><rect x="15" y="12" width="5" height="5" fill="#7fba00"/><rect x="9" y="18" width="5" height="5" fill="#00a4ef"/><rect x="15" y="18" width="5" height="5" fill="#ffb900"/></svg></div>
    <div class="tb"><svg width="30" height="30" viewBox="0 0 30 30"><circle cx="15" cy="15" r="15" fill="#1ed760"/><path d="M7 11c6-2 12-1.500 17 1M8 16c5-1.500 10-1 14 1M9 20.500c4-1 8-.8 11 1" fill="none" stroke="#191414" stroke-width="2.400" stroke-linecap="round"/></svg></div>
    <div class="tb act"><svg width="30" height="26" viewBox="0 0 30 26"><path d="M1 1h11l3 3h14v22H1z" fill="#f7d675"/><path d="M1 1h11l3 3H1z" fill="#e3a520"/><rect x="8" y="14" width="14" height="10" fill="#3b9be0"/><rect x="12" y="18" width="6" height="6" fill="#f7d675"/></svg></div>
    <div class="tb run"><svg width="28" height="28" viewBox="0 0 28 28"><circle cx="14" cy="14" r="14" fill="#dd4438"/><path d="M14 14L26 21A14 14 0 0 1 6 25.500z" fill="#1e9f55"/><path d="M14 14L6 25.500A14 14 0 0 1 2 6.500z" fill="#1e9f55"/><path d="M14 14L14 0A14 14 0 0 1 27 17z" fill="#f2c335"/><path d="M2 7a14 14 0 0 1 12-7v7z" fill="#dd4438"/><circle cx="14" cy="14" r="6" fill="#4a8df0" stroke="#fff" stroke-width="2"/></svg></div>
    <div class="tb run"><svg width="28" height="28" viewBox="0 0 28 28"><rect width="28" height="28" rx="3" fill="#b30b00"/><path d="M6 22c4-2 7-8 8-16 1 7 4 10 9 11-5 0-11 1-17 5z" fill="none" stroke="#fff" stroke-width="1.500"/></svg></div>
    <div class="tb act run"><svg width="30" height="30"><use href="#ea"/></svg></div>
    <div class="tb run"><svg width="28" height="28" viewBox="0 0 28 28"><rect width="28" height="28" fill="#27a5e6"/><path d="M0 28V19L10 8l18 18v2z" fill="#143f8c"/><path d="M0 28V21L8 14l10 14z" fill="#0d2f75"/></svg></div>
    <div class="tb run"><svg width="25" height="26" viewBox="0 0 25 26"><path d="M3 0h19a3 3 0 0 1 3 3v23l-6-5H3a3 3 0 0 1-3-3V3a3 3 0 0 1 3-3z" fill="#6a78c8"/><path d="M6 15c0-3 1.500-6 3-7 3-1 5-1 8 0 1.500 1 3 4 3 7-1.500 1.500-3 2-4 2l-1-1.500h-4L10 17c-1 0-2.500-.5-4-2z" fill="#fff"/><circle cx="10" cy="12.500" r="1.600" fill="#6a78c8"/><circle cx="16" cy="12.500" r="1.600" fill="#6a78c8"/></svg></div>
    <div class="tb run"><svg width="26" height="26" viewBox="0 0 26 26" fill="none"><circle cx="13" cy="13" r="7.500" stroke="#fff" stroke-width="5"/><path d="M13 0v5M13 21v5M0 13h5M21 13h5M3.800 3.800l3.500 3.500M18.700 18.700l3.500 3.500M22.200 3.800l-3.500 3.500M7.300 18.700l-3.500 3.500" stroke="#fff" stroke-width="4.500"/></svg></div>
    <div class="tb run wa">
      <svg width="28" height="30" viewBox="0 0 28 30"><path d="M14 0a13.500 13.500 0 0 1 0 27c-2.500 0-5-.7-7-2l-6 3 2-6A13.500 13.500 0 0 1 14 0z" fill="#3ec95c" stroke="#fff" stroke-width="1.500"/><path d="M9 8c-1 2 0 5 3 8s6 4 8 3l1-2-3-2-2 1-4-4 1-2-2-3z" fill="#fff"/></svg>
      <b class="wa-badge">1</b>
    </div>
    <div class="tb-spacer"></div>
    <div class="tray">
      <div class="tc"><svg width="14" height="9" viewBox="0 0 14 9" fill="none" stroke="#eee" stroke-width="1.200"><path d="M.5 8.500L7 1l6.500 7.500"/></svg></div>
      <div class="tc"><svg width="12" height="20" viewBox="0 0 12 20" fill="#eee"><rect x="3" y="0" width="6" height="13" rx="3"/><path d="M1 8a5 5 0 0 0 10 0M6 13v5M3 19h6" fill="none" stroke="#eee"/></svg></div>
      <div class="tc"><svg width="18" height="12" viewBox="0 0 18 12" fill="none" stroke="#eee"><rect x=".5" y=".5" width="17" height="11"/><rect x="2" y="2" width="6" height="8" fill="#eee" stroke="none"/></svg></div>
      <div class="tc"><svg width="17" height="17" viewBox="0 0 17 17" fill="none" stroke="#ccc"><path d="M1 16A15 15 0 0 1 16 1M5 16A11 11 0 0 1 16 5M9 16a7 7 0 0 1 7-7"/><circle cx="15" cy="15" r="1.500" fill="#eee" stroke="none"/></svg></div>
      <div class="tc"><svg width="20" height="18" viewBox="0 0 20 18" fill="none" stroke="#ddd"><path d="M1 6h3l5-4v14l-5-4H1zM12 5a5 5 0 0 1 0 8M15 2a9 9 0 0 1 0 14"/></svg></div>
      <div class="lang"><span>ENG</span><span>LAA</span></div>
      <div class="clock"><span>8:33 PM</span><span>8/24/2020</span></div>
      <div class="notif">
        <svg width="19" height="18" viewBox="0 0 19 18"><path d="M0 0h19v18H0z" fill="#fff"/><path d="M3 5h13M3 9h13M3 13h9" stroke="#222"/></svg>
        <b class="notif-badge">15</b>
      </div>
      <div class="show-desktop"></div>
    </div>
  </footer>
</div>
</body>
</html>
```
FILE: styles.css
```css
* { box-sizing: border-box; }
html, body { margin: 0; height: 100%; overflow: hidden; }
body { font-family: "Open Sans", "Liberation Sans", sans-serif; font-size: 12px; color: #e6e6e6; background: #2d2d30; }
svg { display: block; flex: none; }
.sprite { position: absolute; width: 0; height: 0; }

.window { width: 1920px; height: 1080px; display: flex; flex-direction: column; border-top: 1px solid #0a9fe8; background: #2d2d30; }

/* title bar */
.titlebar { height: 34px; flex: none; position: relative; display: flex; align-items: center; padding-left: 6px; }
.title-text { position: absolute; left: 729px; top: 8px; font-size: 13.200px; line-height: 18px; color: #dcdcdc; white-space: nowrap; }
.swoosh { position: absolute; right: 3px; top: 2px; }
.winctl { position: absolute; left: 1800px; top: 11px; }

/* menu bar */
.menubar { height: 28px; flex: none; display: flex; margin-left: 3px; margin-right: 2px; border-bottom: 1px solid #7c7c7c; }
.menu-app { width: 67px; height: 27px; background: #007acc; display: flex; align-items: center; justify-content: center; gap: 4px; margin-right: 2px; }
.menu-caret { width: 0; height: 0; border: 3.500px solid transparent; border-top: 4px solid #fff; border-bottom: 0; margin-top: -3px; }
.tab { padding: 0 0 0 15px; font-size: 13px; line-height: 26px; height: 28px; color: #e6e6e6; white-space: nowrap; }
.t-start { width: 65px; letter-spacing: -.6px; }
.t-design { width: 78px; }
.tab-on { width: 79px; letter-spacing: .3px; color: #1c97ea; border: 1px solid #7c7c7c; border-bottom: 1px solid #2d2d30; line-height: 24px; padding-left: 14px; background: #2d2d30; }
.t-publish { width: 85px; }
.t-configure { width: 106px; letter-spacing: .45px; }
.t-construct { width: 107px; letter-spacing: .35px; }
.t-code { width: 66px; letter-spacing: .6px; }
.t-simulate { width: 93.500px; }
.t-execute { width: 85px; }

/* ribbon */
.ribbon { height: 117px; flex: none; display: flex; margin-left: 3px; margin-right: 2px; padding-top: 2px; padding-bottom: 4px; border-left: 1px solid #6a6a6a; border-right: 1px solid #7c7c7c; border-bottom: 3px double #8e8e8e; }
.grp { position: relative; flex: none; display: flex; flex-direction: column; border-right: 1px solid #6a6a6a; height: 108px; }
.grp-body { height: 86px; flex: none; }
.grp-label { height: 22px; line-height: 23px; text-align: center; font-size: 12.800px; color: #dcdcdc; }
.row { display: flex; }
.col { display: flex; flex-direction: column; }
.g-show { width: 67px; }
.g-diagram { width: 394px; }
.g-diagram .row { padding-left: 7px; }
.g-undo { width: 75px; }
.g-undo .grp-body { padding-left: 10px; padding-top: 2px; }
.g-style { width: 220px; }
.g-align { width: 216px; }
.g-tools { width: 150px; }
.g-tools .grp-body { padding-left: 11px; padding-top: 2px; }
.g-filter { width: 238px; }
.g-helpers { width: 262px; }

.big { display: flex; flex-direction: column; align-items: center; padding-top: 3px; }
.w-full { width: 100%; }
.w48 { width: 48px; } .w56 { width: 56px; } .w76 { width: 76px; } .w52 { width: 52px; }
.big-ico { height: 41px; }
.big-label { margin-top: 5px; line-height: 17px; font-size: 13px; white-space: nowrap; color: #ececec; }
.caret-big { width: 0; height: 0; margin-top: 7px; border: 5px solid transparent; border-top: 6px solid #8a8a8a; border-bottom: 0; }
.grp-sep { width: 1px; height: 73px; margin-top: 7px; margin-left: 1px; background: #6a6a6a; }
.small-col { padding-top: 2px; margin-left: 9px; }
.small { height: 26px; display: flex; align-items: center; gap: 4px; white-space: nowrap; font-size: 12.800px; color: #ececec; }
.small > svg { margin-right: 1px; }
.dim { color: #6c6c6c; }
.caret-sm { width: 0; height: 0; margin-left: 5px; margin-top: -3px; border: 3.500px solid transparent; border-top: 4px solid #7b7b7b; border-bottom: 0; }
.caret-xs { width: 0; height: 0; flex: none; border: 4px solid transparent; border-top: 4.500px solid #5d5d60; border-bottom: 0; }
.caret-white { width: 0; height: 0; border: 4px solid transparent; border-top: 5px solid #d8d8d8; border-bottom: 0; }

.style-body { padding: 12px 0 0 7px; gap: 9px; }
.style-row { display: flex; align-items: center; gap: 6px; height: 26px; }
.sr2 { gap: 8px; padding-left: 2px; }
.field { display: flex; align-items: center; justify-content: space-between; height: 26px; padding: 0 5px 0 2px; font-size: 12.800px; color: #ececec; background: #333337; border: 1px solid #434346; white-space: nowrap; }
.f-style { width: 110px; }
.glyph-a { width: 16px; font: 700 20px "Liberation Serif", serif; color: #4c4c50; line-height: 20px; }
.spin { width: 50px; height: 26px; margin-left: -6px; border: 1px solid #8a8a8a; display: flex; align-items: center; justify-content: space-between; padding: 0 6px 0 3px; font-size: 13px; color: #6c6c6c; }
.spin-btn { display: flex; flex-direction: column; gap: 3px; }
.tri-up { width: 0; height: 0; border: 4px solid transparent; border-bottom: 5px solid #d8d8d8; border-top: 0; }
.tri-dn { width: 0; height: 0; border: 4px solid transparent; border-top: 5px solid #d8d8d8; border-bottom: 0; }

.align-grid { display: grid; grid-template-columns: repeat(7, 28px); row-gap: 15px; padding: 15px 0 0 10px; align-content: start; }
.align-caret { position: absolute; left: 199px; top: 50px; border-top-color: #7b7b7b; }

.filter-body { padding: 13px 0 0 7px; gap: 10px; }
.filter-row { display: flex; gap: 2px; }
.f-filter { width: 130px; }
.f-empty { width: 92px; justify-content: flex-end; background: transparent; border-color: #7a7a7a; }
.filter-input { width: 224px; height: 25px; border: 1px solid #6e6e6e; }

.helpers-grid { display: grid; grid-template-columns: 105px auto; grid-auto-rows: 25px; padding: 2px 0 0 10px; align-content: start; }
.chk { display: flex; align-items: center; gap: 5px; font-size: 12.800px; white-space: nowrap; color: #ececec; }
.chk i { width: 14px; height: 14px; flex: none; border: 1px solid #a0a0a0; }
.off { color: #6c6c6c; }
.off i { border-color: #5c5c5c; }

/* document tabs */
.doctabs { height: 25px; flex: none; display: flex; position: relative; padding-left: 8px; }
.doc { display: flex; align-items: center; }
.doc-start { width: 94px; gap: 3px; font-size: 13.200px; color: #e6e6e6; }
.doc-on { width: 350px; height: 25px; margin-top: 1px; padding-left: 6px; gap: 3px; border: 1px solid #5a5a5a; border-bottom: 0; }
.doc-name { width: 303px; color: #1ea4f4; font-weight: 700; font-size: 13.100px; white-space: nowrap; }
.doc-x { margin-left: 0; }
.doc-nav { position: absolute; left: 1883px; top: 7px; }

/* diagram */
.workspace { height: 825px; flex: none; display: flex; border-left: 2px solid #0a8fdc; border-right: 2px solid #0a8fdc; border-bottom: 1px solid #0a8fdc; background: #2d2d30; padding-left: 2px; padding-right: 1px; padding-bottom: 1px; }
.canvas { width: 1891px; height: 823px; flex: none; background: linear-gradient(#ffffff, #e6eaf4 99.700%); border-bottom: 2px solid #9a9a9a; }
.diagram { overflow: hidden; }
.diagram text { font-family: "Open Sans", "Liberation Sans", sans-serif; fill: #0d0d0d; }
.box { stroke: #303030; stroke-width: 1; filter: drop-shadow(2px 2px 1.500px rgba(0, 0, 0, .28)); }
.st { font-size: 14.500px; }
.nm { font-size: 14px; font-weight: 700; }
.lb { font-size: 14.500px; }
.diagram text.tiny { font-size: 7.500px; fill: #4e5a6a; }
.tag { fill: #f8f8fc; }
.lane { stroke: #9c9c9c; stroke-width: 2; fill: none; }
.stem { stroke: #222; stroke-width: 1; fill: none; }
.dep path { fill: none; stroke: #3a3a3a; stroke-width: 1; stroke-dasharray: 6 3; }
.tri { fill: #fbf6e8; stroke: #333; }
.wire { stroke: #2a2a2a; stroke-width: 1; fill: none; }
.ball { fill: #fbf8e6; stroke: #333; }
.arc { fill: none; stroke: #333; }
.lolli circle { fill: #e8dff8; stroke: #333; }

.vscroll { width: 22px; height: 823px; flex: none; position: relative; background: #3e3e42; border-right: 2px solid #8c8c8c; border-bottom: 2px solid #9a9a9a; }
.vs-thumb { position: absolute; left: 4px; top: 22px; width: 13px; height: 690px; background: #787878; }
.vs-up { position: absolute; left: 5px; top: 7px; width: 0; height: 0; border: 5.500px solid transparent; border-bottom: 6px solid #8c8c8c; border-top: 0; }
.vs-down { position: absolute; left: 5px; bottom: 5px; width: 0; height: 0; border: 5.500px solid transparent; border-top: 6px solid #8c8c8c; border-bottom: 0; }

/* taskbar */
.taskbar { height: 50px; flex: none; display: flex; background: linear-gradient(90deg, #202020, #1c1c1c); }
.start { width: 60px; display: flex; align-items: center; justify-content: center; }
.search { width: 430px; display: flex; align-items: center; gap: 12px; padding-left: 15px; background: #2e2e2e; border: 1px solid #4e4e4e; border-bottom: 0; border-top: 0; font-size: 18px; color: #c8c8c8; }
.tb { width: 62px; position: relative; display: flex; align-items: center; justify-content: center; flex: none; }
.run::after { content: ""; position: absolute; left: 4px; right: 4px; bottom: 0; height: 3px; background: #a9c0b0; }
.act { background: #4a4a4a; }
.act.run::after, .act::after { content: ""; position: absolute; left: 0; right: 0; bottom: 0; height: 3px; background: #a9c0b0; }
.wa { padding-right: 2px; }
.wa-badge { position: absolute; left: 29px; top: 24px; width: 18px; height: 18px; border-radius: 50%; background: #f00014; color: #fff; font-size: 12px; font-weight: 400; line-height: 18px; text-align: center; }
.tb-spacer { flex: 1; }
.tray { display: flex; align-items: center; }
.tc { width: 30px; display: flex; justify-content: center; }
.lang, .clock { display: flex; flex-direction: column; align-items: center; justify-content: center; gap: 3px; font-size: 14.300px; line-height: 20px; color: #e0e0e0; white-space: nowrap; margin-top: -2px; }
.lang { width: 44px; }
.clock { width: 84px; }
.notif { width: 62px; position: relative; padding-left: 18px; margin-top: -8px; }
.notif-badge { position: absolute; left: 25px; top: 8px; width: 22px; height: 22px; border-radius: 50%; background: #2e2e2e; border: 1px solid #8a8a8a; color: #fff; font-size: 12px; font-weight: 600; line-height: 20px; text-align: center; }
.show-desktop { width: 6px; height: 50px; border-left: 1px solid #7a7a7a; }
```
